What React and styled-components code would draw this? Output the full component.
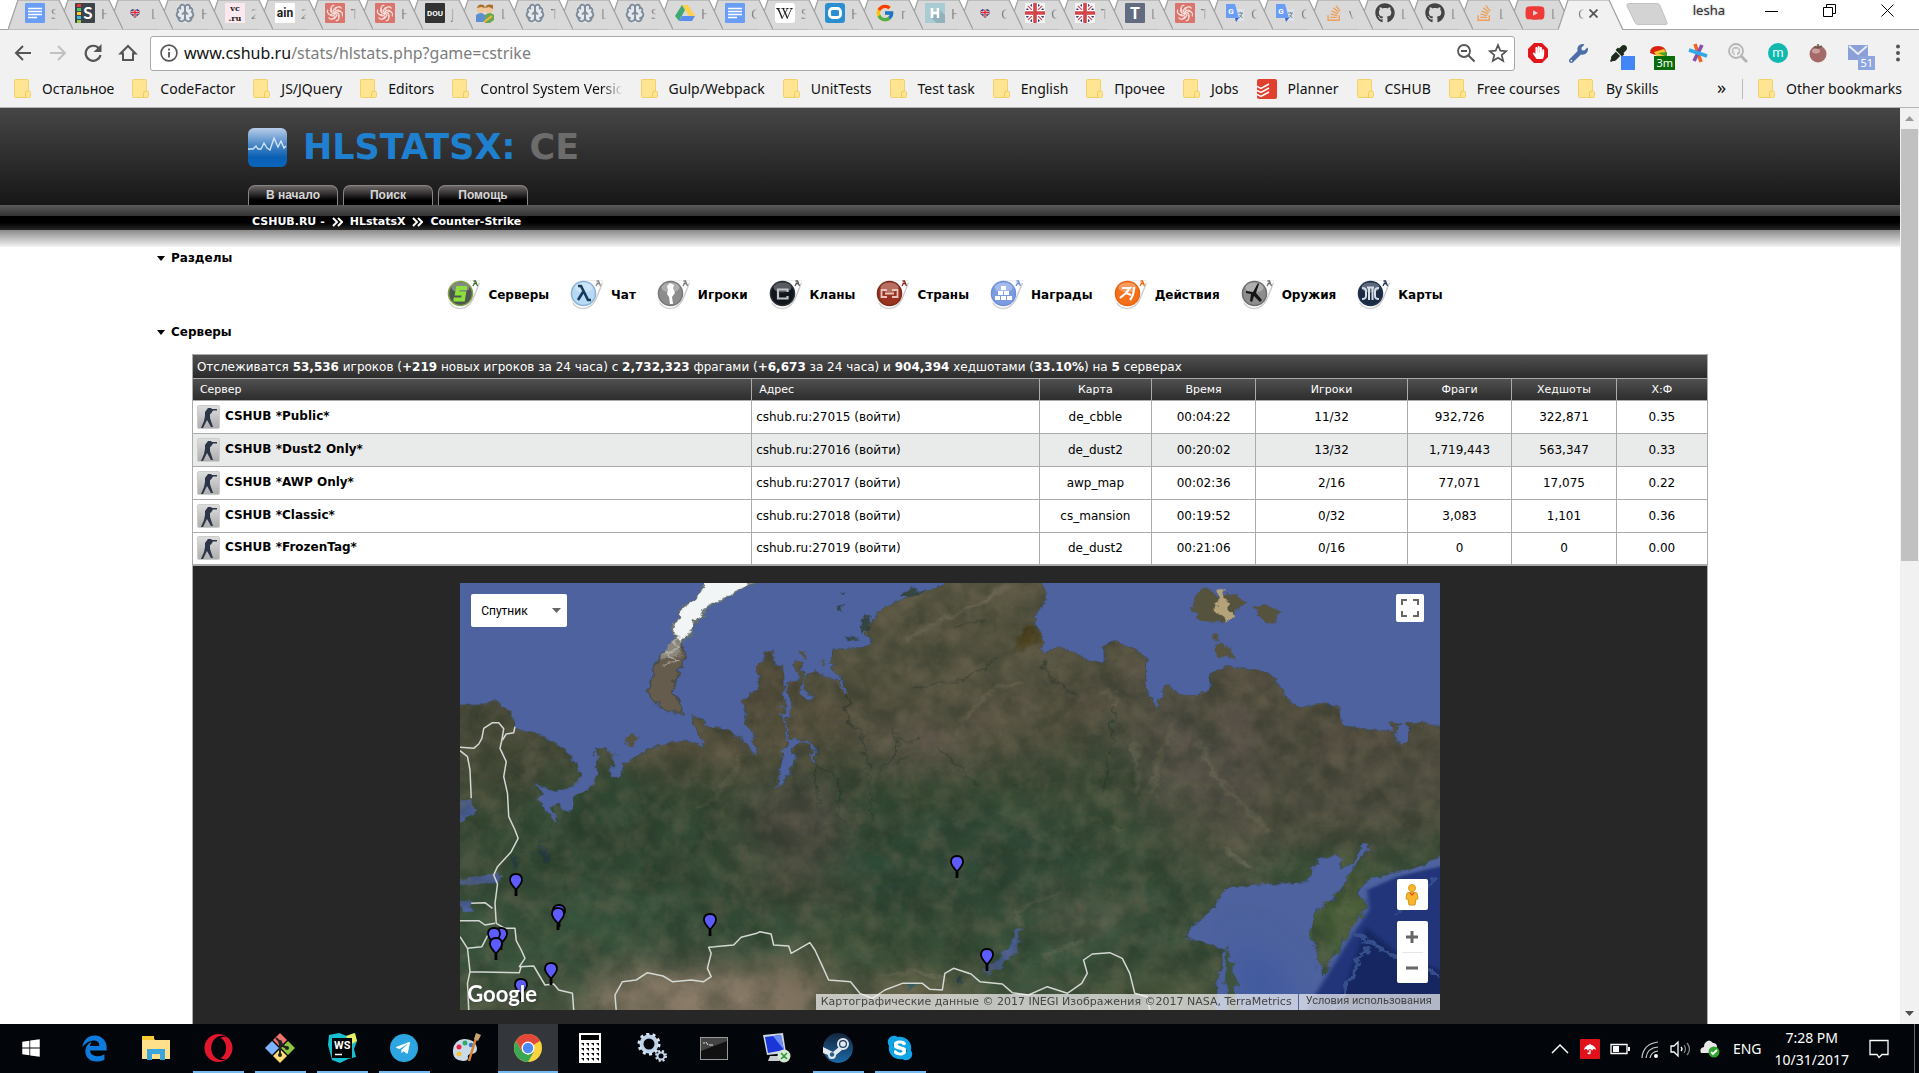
import React from "react";
import styled, { createGlobalStyle } from "styled-components";
import {
  FaGithub, FaStackOverflow, FaYoutube, FaWindows, FaEdgeLegacy, FaOpera,
  FaTelegramPlane, FaSkype, FaWrench, FaEyeDropper, FaHandPaper,
  FaWikipediaW, FaUmbrella,
} from "react-icons/fa";
import { FcGoogle } from "react-icons/fc";
import { Brain } from "lucide-react";

const UI = '"Noto Sans", "Open Sans", sans-serif';
const PAGE = '"DejaVu Sans", Verdana, sans-serif';

const Global = createGlobalStyle`
  *, *::before, *::after { box-sizing: border-box; }
  html, body { margin: 0; height: 100%; }
  body { background: #fff; overflow: hidden; }
  button, input, select { font: inherit; color: inherit; margin: 0; padding: 0; border: 0; background: none; border-radius: 0; }
  a { color: inherit; text-decoration: none; }
  svg { display: block; flex: none; }
  h1, h2, p, ul { margin: 0; padding: 0; font: inherit; list-style: none; }
`;

const Desktop = styled.div`
  height: 100vh;
  display: flex;
  flex-direction: column;
  font-family: ${UI};
`;

/* ---------- tab strip ---------- */
const TabStrip = styled.header`
  display: flex;
  height: 30px;
  padding-left: 8px;
  background: #fff;
  border-bottom: 1px solid #a5a5a5;
`;
const Tab = styled.button`
  position: relative;
  z-index: ${(p) => p.$z};
  flex: none;
  display: flex;
  align-items: center;
  gap: ${(p) => (p.$active ? 2 : 6)}px;
  width: 65px;
  height: 30px;
  margin-right: -15px;
  padding: 0 0 4px ${(p) => (p.$active ? 20 : 17)}px;
  font-size: 14px;
  color: #666;
`;
const TabShape = styled.svg`
  position: absolute;
  inset: 0;
  z-index: -1;
`;
const TabTitle = styled.span`
  mask-image: linear-gradient(90deg, #000, transparent 70%);
`;
const NewTab = styled.button`
  flex: none;
  margin: 3px 0 0 18px;
  width: 43px;
  height: 22px;
`;
const WindowTools = styled.div`
  flex: 1;
  display: flex;
  justify-content: flex-end;
  align-items: center;
  gap: 45px;
  padding: 0 25px 9px 0;
  font-size: 13px;
  color: #333;
`;
const UserName = styled.button`
  margin-right: -5px;
  text-shadow: 0 0 2px #999;
`;
const WinButton = styled.button`
  width: 13px;
  height: 13px;
`;

/* ---------- toolbar ---------- */
const Toolbar = styled.div`
  display: flex;
  align-items: center;
  gap: 16px;
  height: 46px;
  padding: 0 11px 0 13px;
  background: #f1f1f1;
`;
const IconButton = styled.button`
  flex: none;
  display: grid;
  place-items: center;
  position: relative;
  width: 20px;
  height: 24px;
  color: ${(p) => p.$color || "#555"};
  opacity: ${(p) => (p.$off ? 0.3 : 1)};
`;
const NavGroup = styled.div`
  display: flex;
  gap: 15px;
`;
const Omnibox = styled.form`
  flex: 1;
  display: flex;
  align-items: center;
  gap: 12px;
  height: 35px;
  margin-left: -4px;
  padding: 0 6px 0 9px;
  background: #fff;
  border: 1px solid #a9a9a9;
  border-radius: 3px;
`;
const UrlBox = styled.div`
  position: relative;
  flex: 1;
  display: flex;
  align-items: center;
  margin-left: -6px;
  font-size: 16px;
  line-height: 24px;
  color: #7d7d7d;
`;
const UrlInput = styled.input`
  width: 100%;
  outline: 0;
  color: transparent;
  caret-color: #000;
`;
const UrlPaint = styled.span`
  position: absolute;
  left: 0;
  pointer-events: none;
  b { font-weight: 400; color: #111; }
`;
const Extensions = styled.div`
  display: flex;
  gap: 20px;
  margin-left: -3px;
`;
const ExtBadge = styled.span`
  position: absolute;
  right: -7px;
  bottom: -5px;
  min-width: 14px;
  height: 14px;
  padding: 0 2px;
  background: ${(p) => p.$bg};
  color: #fff;
  font-size: 11px;
  line-height: 14px;
`;

/* ---------- bookmarks ---------- */
const Bookmarks = styled.nav`
  display: flex;
  align-items: center;
  gap: 18px;
  height: 32px;
  padding: 0 17px 6px 14px;
  background: #f1f1f1;
  border-bottom: 1px solid #b5b5b5;
  font-size: 14px;
  line-height: 20px;
  color: #111;
`;
const Bookmark = styled.a`
  display: flex;
  align-items: center;
  gap: 11px;
  white-space: nowrap;
`;
const Faded = styled.span`
  mask-image: linear-gradient(90deg, #000 85%, transparent);
`;
const Overflow = styled.button`
  margin-left: auto;
  padding: 0 0 3px;
  font-size: 18px;
`;
const Divider = styled.span`
  width: 1px;
  height: 20px;
  margin: 0 -3px 0 -2px;
  background: #bbb;
`;

/* ---------- page ---------- */
const Viewport = styled.div`
  flex: 1;
  min-height: 0;
  display: flex;
  background: #fff;
`;
const Page = styled.main`
  flex: 1;
  min-width: 0;
  overflow: hidden;
  font-family: ${PAGE};
  font-size: 12px;
  color: #000;
`;
const Banner = styled.div`
  display: flex;
  flex-direction: column;
  justify-content: space-between;
  height: 97px;
  padding: 19px 0 0 248px;
  background: linear-gradient(#464646, #161616);
`;
const Logo = styled.a`
  display: flex;
  align-items: center;
  gap: 16px;
  font-weight: 700;
  font-size: 35px;
  line-height: 40px;
  color: #2080d0;
  span { color: #6c6c6c; margin-left: 2px; }
`;
const MenuTabs = styled.nav`
  display: flex;
  gap: 5px;
`;
const MenuTab = styled.a`
  width: 90px;
  height: 20px;
  border: 1px solid #8a8585;
  border-bottom: 0;
  border-radius: 7px 7px 0 0;
  background: linear-gradient(#6d6767, #000 75%);
  font: 700 12px/19px "Liberation Sans", Arial, sans-serif;
  text-align: center;
  color: #d6d6d6;
`;
const Crumbs = styled.nav`
  display: flex;
  align-items: center;
  gap: 7px;
  height: 25px;
  padding: 9px 0 0 252px;
  background: linear-gradient(#5a5a5a, #333 44%, #000 45%, #000 70%, #262626);
  font-weight: 700;
  font-size: 11px;
  line-height: 14px;
  color: #fff;
`;
const Fade = styled.div`
  height: 17px;
  background: linear-gradient(#8a8a8a, #f4f4f4);
`;
const SectionTitle = styled.h2`
  display: flex;
  align-items: center;
  gap: 6px;
  padding-left: 157px;
  font-weight: 700;
  font-size: 12px;
  line-height: 22px;
`;
const Sections = styled.ul`
  display: flex;
  justify-content: center;
  gap: 21px;
  padding: 10px 10px 11px 0;
`;
const SectionLink = styled.a`
  display: flex;
  align-items: center;
  gap: 8px;
  font-weight: 700;
  font-size: 12px;
  line-height: 30px;
`;
const Board = styled.section`
  width: 79.8%;
  margin: 11px auto 0;
  border: 1px solid #ababab;
  background: #272727;
`;
const Summary = styled.p`
  padding: 1px 4px 0;
  border-bottom: 1px solid #ababab;
  background: linear-gradient(#505050, #2b2b2b);
  color: #fff;
  font-size: 12px;
  line-height: 22px;
`;
const Table = styled.table`
  width: 100%;
  table-layout: fixed;
  border-collapse: collapse;
  border-bottom: 2px solid #ababab;
  background: #fff;
`;
const Th = styled.th`
  height: 21px;
  padding: 2px 7px 0;
  border-right: 1px solid #ababab;
  border-bottom: 1px solid #ababab;
  background: linear-gradient(#505050, #2d2d2d);
  color: #fff;
  font-weight: 400;
  font-size: 11px;
  line-height: 14px;
  text-align: ${(p) => (p.$left ? "left" : "center")};
  &:last-child { border-right: 0; }
`;
const Tr = styled.tr`
  background: ${(p) => (p.$alt ? "#e9ebea" : "#fff")};
`;
const Td = styled.td`
  height: 33px;
  padding: 0 4px;
  border-right: 1px solid #ababab;
  border-bottom: 1px solid #ababab;
  line-height: 16px;
  text-align: ${(p) => (p.$left ? "left" : "center")};
  &:last-child { border-right: 0; }
`;
const ServerName = styled.a`
  display: flex;
  gap: 5px;
  font-weight: 700;
  line-height: 22px;
`;

/* ---------- map ---------- */
const MapBox = styled.div`
  position: relative;
  width: 64.7%;
  margin: 17px auto 16px;
  height: 427px;
  overflow: hidden;
  background: #4d639e;
`;
const MapArt = styled.svg`
  width: 100%;
  height: 100%;
`;
const Pin = styled.button`
  position: absolute;
  left: ${(p) => p.$x}%;
  top: ${(p) => p.$y}%;
  width: 14px;
  height: 23px;
  transform: translate(-50%, 0);
`;
const MapType = styled.label`
  position: absolute;
  left: 11px;
  top: 11px;
  display: flex;
  align-items: center;
  width: 96px;
  height: 33px;
  padding: 0 6px 0 10px;
  border-radius: 2px;
  background: #fff;
  font: 12px/16px Roboto, sans-serif;
  select { appearance: none; flex: 1; outline: 0; }
`;
const MapControl = styled.div`
  position: absolute;
  right: ${(p) => p.$right}px;
  top: ${(p) => p.$top}px;
  display: flex;
  flex-direction: column;
  background: #fff;
  border-radius: 2px;
`;
const MapButton = styled.button`
  display: grid;
  place-items: center;
  width: ${(p) => p.$size}px;
  height: ${(p) => p.$size}px;
  & + &::before {
    content: "";
    position: absolute;
    top: 31px;
    left: 5px;
    right: 5px;
    border-top: 1px solid #e6e6e6;
  }
`;
const GoogleMark = styled.a`
  position: absolute;
  left: 7px;
  bottom: 2px;
  font: 700 22px/28px Lato, sans-serif;
  color: #fff;
  text-shadow: 0 0 2px #444;
`;
const Attribution = styled.div`
  position: absolute;
  right: 0;
  bottom: 0;
  display: flex;
  background: rgba(245, 245, 245, 0.7);
  color: #444;
  font-size: 11px;
  line-height: 16px;
  span { padding: 0 6px 0 5px; border-right: 1px solid #4d639e; }
  a { padding: 0 8px 0 7px; font: 11px/14px Roboto, sans-serif; }
`;

const ScrollBar = styled.div`
  flex: none;
  display: flex;
  flex-direction: column;
  align-items: center;
  width: 19px;
  padding: 8px 0;
  background: #f1f1f1;
`;
const Thumb = styled.div`
  width: 17px;
  height: 48%;
  margin: 8px 0 auto;
  background: #c1c1c1;
`;

/* ---------- taskbar ---------- */
const TaskBar = styled.footer`
  flex: none;
  display: flex;
  justify-content: space-between;
  height: 49px;
  background: #020509;
  color: #fff;
`;
const Apps = styled.div`
  display: flex;
  gap: 2px;
`;
const AppButton = styled.button`
  position: relative;
  display: grid;
  place-items: center;
  width: ${(p) => (p.$wide ? 62 : 60)}px;
  padding-bottom: 1px;
  color: ${(p) => p.$color || "#fff"};
  background: ${(p) => (p.$active ? "#33373b" : "none")};
  &::after {
    content: "";
    position: absolute;
    bottom: 0;
    left: ${(p) => (p.$active ? 0 : 5)}px;
    right: ${(p) => (p.$active ? 0 : 4)}px;
    height: ${(p) => (p.$open || p.$active ? 2 : 0)}px;
    background: #76b9ed;
  }
`;
const Tray = styled.div`
  display: flex;
  align-items: center;
  gap: 10px;
  margin-right: 4px;
  padding-right: 25px;
  border-right: 1px solid #667;
  font-size: 14px;
`;
const Language = styled.span`
  margin-left: 3px;
`;
const Clock = styled.time`
  margin: 0 10px 0 3px;
  text-align: center;
  line-height: 22px;
`;

/* ---------- small drawings ---------- */
const Svg = ({ s = 20, w = s, h = s, vb = "0 0 20 20", ...rest }) => (
  <svg width={w} height={h} viewBox={vb} fill="none" aria-hidden="true" {...rest} />
);

const Folder = () => (
  <Svg w={17} h={19} vb="0 0 17 19">
    <path d="M1.500 .5h12q1 0 1 1V12h.5q1.500 0 1.500 2v3q0 1.500-1.500 1.500H1.500q-1 0-1-1V1.500q0-1 1-1z" fill="#ffe592" stroke="#f2d16b" />
    <path d="M11.500 18.500v-4q0-2.500 3-2.500" stroke="#eec95b" />
  </Svg>
);
const Tile = ({ bg, fg = "#fff", t, size = 11, font = "Roboto", r = 1 }) => (
  <Svg>
    <rect width="20" height="20" rx={r} fill={bg} />
    <text x="10" y={10 + size * 0.36} fontSize={size} fontWeight="700" fontFamily={font} fill={fg} textAnchor="middle">{t}</text>
  </Svg>
);
const VcRu = () => (
  <Svg>
    <rect width="20" height="20" fill="#fbe9ef" />
    <g fontSize="8" fontWeight="700" fontFamily="DejaVu Serif" fill="#222" textAnchor="middle"><text x="10" y="8">vc</text><text x="10" y="18">.ru</text></g>
  </Svg>
);
const Docs = () => (
  <Svg>
    <rect width="20" height="20" rx="1" fill="#6a9df8" />
    <path d="M3 5.500h14M3 8.500h14M3 11.500h14M3 14.500h9" stroke="#fff" strokeWidth="1.500" />
  </Svg>
);
const SSlides = () => (
  <Svg>
    <rect width="20" height="20" rx="1" fill="#3c434b" />
    <path d="M4 1v3" stroke="#e33" strokeWidth="4" /><path d="M4 5v3" stroke="#4c6" strokeWidth="4" />
    <path d="M4 9v3" stroke="#fc3" strokeWidth="4" /><path d="M4 13v3" stroke="#3bd" strokeWidth="4" /><path d="M4 17v3" stroke="#9c4" strokeWidth="4" />
    <text x="13" y="16" fontSize="17" fontWeight="700" fontFamily="Lato" fill="#fff" textAnchor="middle">S</text>
  </Svg>
);
const Heart = () => (
  <Svg>
    <path d="M10 15 5.500 11V7.500L7.500 6 10 7 12.500 6l2 1.500V11z" fill="#4a4a7a" />
    <path d="M10 7v7M6 9.500h8" stroke="#fff" strokeWidth="2.600" /><path d="M10 7v7M6 9.500h8" stroke="#d23" strokeWidth="1.400" />
  </Svg>
);
const Flag = () => (
  <Svg>
    <rect width="20" height="20" fill="#f4f4f4" /><circle cx="10" cy="10" r="9.500" fill="#33407e" />
    <path d="M3 3l14 14M17 3L3 17" stroke="#fff" strokeWidth="4" /><path d="M3 3l14 14M17 3L3 17" stroke="#d2555a" strokeWidth="1.200" />
    <path d="M10 0v20M0 10h20" stroke="#fff" strokeWidth="6" /><path d="M10 0v20M0 10h20" stroke="#d2454a" strokeWidth="3.600" />
  </Svg>
);
const Swirl = () => (
  <Svg>
    <rect width="20" height="20" rx="1" fill="#d9756c" />
    <g stroke="#f7dcd8" strokeWidth="1.300">
      {[0, 60, 120, 180, 240, 300].map((a) => <path key={a} transform={`rotate(${a} 10 10)`} d="M10 10c0-3 4-4 6-1M10 7c1-4 5-4 6.500-1.500" />)}
    </g>
  </Svg>
);
const Drive = () => (
  <Svg>
    <path d="M7 2h6l7 11h-6z" fill="#ffd04b" /><path d="M7 2l3 5L4 18l-4-5z" fill="#3fa972" /><path d="M7 13h13l-3 5H4z" fill="#5b8df0" />
  </Svg>
);
const Ring = () => (
  <Svg>
    <rect width="20" height="20" rx="3" fill="#2a8fd0" /><rect x="4.500" y="5.500" width="11" height="9" rx="3" stroke="#fff" strokeWidth="2.800" />
  </Svg>
);
const Translate = () => (
  <Svg>
    <path d="M9 6h10v12h-7z" fill="#dde3ea" /><path d="M1 1h9l4 14H1z" fill="#6a9df8" /><path d="M10 15h4l-3 4z" fill="#3a62c8" />
    <text x="6" y="11" fontSize="8" fontWeight="700" fontFamily="Roboto" fill="#fff" textAnchor="middle">G</text>
    <path d="M13 10h5M15.500 9v1M17 10c-1 3-2 4-3 5M14.500 12l3 3" stroke="#7a8590" />
  </Svg>
);
const HShadow = () => (
  <Svg>
    <rect width="20" height="20" fill="#a9cbd3" /><path d="M14 6l6 6v8h-8l-6-5z" fill="#8fb2bd" />
    <path d="M7 5v10M13 5v10M7 10h6" stroke="#fff" strokeWidth="2.500" />
  </Svg>
);
const People = () => (
  <Svg>
    <path d="M1 12q5-4 9 0v7H1z" fill="#5b8fd0" /><path d="M10 12q5-4 9 0v5l-4 3h-5z" fill="#6aa84f" />
    <circle cx="6" cy="6" r="4" fill="#f2c79a" /><circle cx="14" cy="6" r="4" fill="#f2c79a" />
    <path d="M2 5q1-5 7-3l1 3-4-1zM10 5q1-5 8-3v4l-4-2z" fill="#a8712d" /><path d="M9 19l8-6" stroke="#f3b53b" strokeWidth="2" />
  </Svg>
);
const brain = <Svg><circle cx="10" cy="10" r="9.500" fill="#e6e9ec" /><Brain x="0" y="0" size={20} color="#7d8a9a" strokeWidth={2.200} /></Svg>;
const so = <FaStackOverflow size={18} color="#f0a05a" />;
const gh = <FaGithub size={20} color="#444" />;

const tabs = [
  [<Docs />, "S"], [<SSlides />, "H"], [<Heart />, "L"], [brain, "H"],
  [<VcRu />, "2"],
  [<Tile bg="#fff" fg="#222" t="ain" size={12} />, "2"], [<Swirl />, "T"], [<Swirl />, "H"],
  [<Tile bg="#333" t="DOU" size={8} />, "J"], [<People />, "L"], [brain, "T"], [brain, "L"], [brain, "S"],
  [<Drive />, "H"], [<Docs />, "C"],
  [<Svg><rect width="20" height="20" rx="3" fill="#fff" /><FaWikipediaW x="1" y="2" size={17} color="#222" /></Svg>, "S"],
  [<Ring />, "H"], [<FcGoogle size={20} />, "п"], [<HShadow />, "H"], [<Heart />, "C"], [<Flag />, "C"], [<Flag />, "T"],
  [<Tile bg="#626b80" t="T" size={16} />, "L"], [<Swirl />, "T"], [<Translate />, "C"], [<Translate />, "C"],
  [so, "v"], [gh, "L"], [gh, "L"], [so, "L"], [<FaYoutube size={20} color="#f03a38" />, "L"],
];

const bookmarks = ["Остальное", "CodeFactor", "JS/JQuery", "Editors", "Control System Versic", "Gulp/Webpack", "UnitTests",
  "Test task", "English", "Прочее", "Jobs", "Planner", "CSHUB", "Free courses", "By Skills"];

const Todoist = () => (
  <Svg>
    <rect width="20" height="20" rx="2" fill="#e2402f" />
    <path d="M0 7.500l4 2 8-4.500M0 11.500l4 2 8-4.500M0 15.500l4 2 8-4.500" stroke="#fff" strokeWidth="1.500" />
  </Svg>
);

/* Round badge with the small figure at its upper right */
const Badge = ({ fill, edge, mark, children }) => (
  <Svg w={33} h={31} vb="0 0 33 31">
    <path d="M13 1.500H33L25 22Q21 30 13 30 1 29 1 16 1 2 13 1.500z" fill="#fff" stroke="#efefef" />
    <path d="M32.500 4L26 20Q22 29 13 29.500 6 29 3 24" stroke="#c9c9c9" strokeWidth="1.200" />
    <circle cx="13.500" cy="14.500" r="12" fill={fill} stroke={edge} strokeWidth="1.500" />
    <ellipse cx="13.500" cy="8.500" rx="9" ry="5" fill="#fff" opacity=".3" />
    <path d="M26.500 2h2l2 5M28 3.500L26 7M26.500 4.500h3" stroke={mark || edge} strokeWidth="1.300" />
    {children}
  </Svg>
);
const sections = [
  ["Серверы", <Badge fill="#4f5550" edge="#7fa344" mark="#3c6a2a"><path d="M20 9h-9l-1 5.500h7l-1 6H6.500" stroke="#8be03a" strokeWidth="4" /></Badge>],
  ["Чат", <Badge fill="#b8d9f3" edge="#8ab2d6" mark="#888"><path d="M8 7h3l7 14h3M13 13l-5 8" stroke="#123a5e" strokeWidth="2.600" /></Badge>],
  ["Игроки", <Badge fill="#8c8c8c" edge="#777"><path d="M13 4l4 2-1 3 2 5-3 4 1 7h-3l-1-7-2-3 1-4-1-4z" fill="#fff" /></Badge>],
  ["Кланы", <Badge fill="#10161c" edge="#2a3036" mark="#555"><path d="M18.500 13v-2.500H9v9h9.500V17" stroke="#bfc3c6" strokeWidth="2.200" /></Badge>],
  ["Страны", <Badge fill="#99321f" edge="#7f2a1c"><path d="M11 11H5.500v7H11M16 11h5.500v7H16M9 14.500h9" stroke="#e6c4bb" strokeWidth="1.800" /></Badge>],
  ["Награды", <Badge fill="#7c9ce2" edge="#6f8fd8"><path d="M11 7h5v4h-5zM8 12h5v4H8zM14 12h5v4h-5zM5 17h5v4H5zM11 17h5v4h-5zM17 17h5v4h-5z" fill="#fff" /></Badge>],
  ["Действия", <Badge fill="#f4701a" edge="#e8640f"><path d="M8 9h8l-4 5-6 5M12 14l5 2M20 8q0 8-4 13" stroke="#fff" strokeWidth="2.200" /></Badge>],
  ["Оружия", <Badge fill="#8d8d8d" edge="#6d6d6d"><path d="M5 12l7 1 5-9 1 1-3 9 6 7-2 2-6-6-2 6-2-1 1-7-5-1z" fill="#151515" /></Badge>],
  ["Карты", <Badge fill="#1b2b44" edge="#22344f"><path d="M5 9q4 0 4 3v5q0 3-4 3M22 9q-4 0-4 3v5q0 3 4 3M12 9v12M15.500 9v12M10 8.500h7" stroke="#d4dde8" strokeWidth="2" /></Badge>],
];

const servers = [
  ["*Public*", 27015, "de_cbble", "00:04:22", "11/32", "932,726", "322,871", "0.35"],
  ["*Dust2 Only*", 27016, "de_dust2", "00:20:02", "13/32", "1,719,443", "563,347", "0.33"],
  ["*AWP Only*", 27017, "awp_map", "00:02:36", "2/16", "77,071", "17,075", "0.22"],
  ["*Classic*", 27018, "cs_mansion", "00:19:52", "0/32", "3,083", "1,101", "0.36"],
  ["*FrozenTag*", 27019, "de_dust2", "00:21:06", "0/16", "0", "0", "0.00"],
];
const columns = [["Сервер", 36.9], ["Адрес", 19], ["Карта", 7.4], ["Время", 6.9], ["Игроки", 10], ["Фраги", 6.9], ["Хедшоты", 6.9], ["Х:Ф", 6]];

const Soldier = () => (
  <Svg w={23} h={24} vb="0 0 23 24">
    <defs><linearGradient id="plate" x2="0" y2="1"><stop stopColor="#dedede" /><stop offset="1" stopColor="#adadad" /></linearGradient></defs>
    <rect x=".5" y=".5" width="22" height="23" rx="1.500" fill="url(#plate)" stroke="#ccc" />
    <path d="M11 3h3l1 1h5v1.500h-4l-2 3-1 .5v4l3 9h-2l-4-7-2 4-2 4H4l3-7 1-5 0-4z" fill="#2c3448" />
  </Svg>
);
const Chevrons = () => <Svg w={11} h={10} vb="0 0 11 10"><path d="M1 1l4 4-4 4M6 1l4 4-4 4" stroke="#fff" strokeWidth="2" /></Svg>;
const Caret = () => <Svg w={8} h={5} vb="0 0 8 5"><path d="M0 0h8L4 5z" fill="#000" /></Svg>;

/* ---------- satellite map ---------- */
const LAND = "M-20 382L12 372 28 376 55 365 66 382 80 395 88 420 84 440 112 460 138 476 160 500 180 535 193 580 190 608 170 625 150 632 118 610 128 640 130 688 146 702 154 735 158 725 148 682 156 672 166 692 180 698 182 650 200 635 212 610 222 580 220 540 216 503 236 506 248 526 244 560 236 548 240 592 256 592 262 552 300 512 330 490 360 484 392 502 384 470 376 440 368 405 382 410 390 440 430 450 456 485 475 530 474 490 464 450 455 430 455 360 476 328 478 260 488 222 496 212 504 250 518 262 518 320 516 400 524 480 512 560 503 622 512 622 534 560 536 495 545 486 560 494 566 555 572 548 566 490 550 478 530 474 524 430 530 370 524 320 540 300 544 280 534 242 548 245 550 300 540 340 556 360 570 352 550 330 556 282 570 275 600 300 614 345 622 340 606 290 598 280 596 212 640 202 658 196 650 150 668 100 696 70 720 50 760 30 790 -10 932 -10 938 60 918 110 930 170 933 218 955 202 980 210 1000 240 1030 248 1030 200 1042 182 1080 210 1097 240 1097 330 1115 388 1130 316 1150 340 1180 350 1200 332 1200 280 1230 260 1290 275 1308 310 1322 348 1340 384 1390 370 1408 390 1410 432 1440 446 1494 455 1490 430 1504 432 1495 470 1512 498 1522 465 1516 428 1540 430 1590 438V805L1530 865 1490 875 1452 900 1438 940 1452 975 1435 1030 1400 1120 1385 1188 1374 1150 1363 1060 1368 1000 1400 950 1428 880 1455 790 1444 790 1430 850 1412 862 1405 820 1372 836 1355 900 1330 912 1290 912 1230 920 1200 990 1158 1072 1190 1085 1222 1110 1214 1180 1208 1310 H-20z";
const LandPatches = [
  [760, 150, 320, 190, "#5a5443", 0.9], [1400, 560, 300, 240, "#544f42", 0.8], [1180, 330, 220, 100, "#5a5344", 0.8],
  [740, 480, 110, 90, "#655a50", 0.65], [550, 720, 100, 110, "#4e4942", 0.8], [590, 900, 150, 70, "#504a3c", 0.6],
  [420, 480, 170, 90, "#54513d", 0.9], [880, 400, 90, 100, "#60584a", 0.6], [900, 700, 300, 120, "#374e36", 0.7],
  [220, 780, 140, 230, "#314b36", 0.8], [800, 860, 220, 140, "#304b38", 0.9], [1120, 480, 50, 260, "#5b554d", 0.6],
  [1220, 760, 80, 160, "#635a4a", 0.55], [1230, 560, 80, 180, "#54524b", 0.5], [400, 1260, 200, 110, "#8f7d6b", 0.95],
  [540, 1200, 70, 90, "#7a6c57", 0.6], [720, 1250, 90, 60, "#7a6a50", 0.75], [1150, 1230, 130, 80, "#4a543c", 0.7],
  [1000, 1010, 90, 70, "#59604e", 0.6], [60, 520, 110, 130, "#444b39", 0.8], [1420, 1000, 60, 140, "#4f663c", 0.9],
  [490, 340, 70, 170, "#57503e", 0.9], [580, 400, 60, 120, "#57533f", 0.8], [700, 1080, 160, 60, "#3f5239", 0.7], [200, 1060, 220, 110, "#3a5740", 0.7],
  [1000, 600, 130, 80, "#414f3a", 0.6], [1250, 1050, 120, 60, "#44543b", 0.6],
];
const Borders = [
  "M0 502L22 505 30 492 35 475 38 445 52 428 62 428 70 446 67 480 64 505 74 545 70 590 76 640 78 710 88 750 93 775 82 815 60 860 54 885 60 912 56 970 58 1030 72 1045 88 1045 90 1082 98 1110 104 1135 95 1160 118 1158 136 1215 150 1212 158 1230 180 1240 182 1290",
  "M88 440L86 458 74 462 68 480", "M0 512L12 530 16 570 18 655",
  "M0 1022L30 1022 40 1035 56 1030M18 970L40 968 52 985M0 1070L12 1105 35 1100 46 1060M12 1105L16 1175 95 1178 98 1158M16 1175L12 1210 14 1290",
  "M250 1290L248 1245 260 1205 282 1200 300 1178 325 1188 340 1205 370 1200 390 1205 402 1190 396 1165 402 1120 398 1102 438 1095 450 1072 475 1060 480 1055 498 1062 502 1095 526 1098 530 1120 560 1088 568 1110 578 1150 590 1200 625 1205 640 1240 660 1255 680 1230 708 1210 740 1210 752 1228 772 1230 776 1180 790 1165 818 1182 832 1205 868 1212 884 1238 910 1245 940 1220 972 1240 995 1210 1004 1180 998 1140 1012 1122 1040 1118 1060 1135 1072 1180 1080 1240 1100 1250 1104 1290",
];
const Rivers = [
  "M858 235L830 275 800 300 760 312 720 325", "M568 558L600 580 608 650 604 700 614 730", "M568 500L570 600 574 690",
  "M618 340L622 430 645 460 652 560 664 760", "M140 770L128 800 138 850", "M84 820L94 860",
  "M690 440L700 490 690 540 670 580", "M700 470L720 490 740 470", "M934 240L940 290 990 350", "M1050 380L1040 520 1030 640",
  "M790 140L810 130 840 120", "M910 760L920 790", "M718 530L690 560", "M760 500L800 560 830 620",
];
const DarkBands = [["M380 700L374 860 362 1000 355 1180", 16], ["M660 540L670 700 690 800", 12], ["M1045 400L1035 560", 12], ["M690 960L760 1100", 16]];
const Ridges = [
  ["M870 20L830 75 760 130 712 180", 7], ["M905 312L860 320 830 370 800 430 802 480", 6], ["M448 520L440 580 410 650 380 690", 4],
  ["M1140 430L1115 560 1108 640", 4], ["M1180 480L1210 590 1250 670 1300 760", 5], ["M1220 800L1260 860", 8], ["M1080 480L1085 640", 5],
  ["M1012 710L1025 730M1040 740L1060 750", 4], ["M1020 340L1045 330 1050 380", 5], ["M900 1040L890 1000 920 960 960 940", 4], ["M680 1190L730 1170 780 1200", 6],
  ["M930 1130L1000 1080", 5], ["M1425 900L1410 1000", 4],
];

function SatelliteMap() {
  return (
    <MapArt viewBox="0 9 1568 1281" preserveAspectRatio="none" role="img" aria-label="Карта игроков">
      <defs>
        <clipPath id="land"><path d={LAND} /></clipPath>
        <filter id="soft" x="-50%" y="-50%" width="200%" height="200%"><feGaussianBlur stdDeviation="30 44" /></filter>
        <filter id="soften" x="-20%" y="-20%" width="140%" height="140%"><feGaussianBlur stdDeviation="3" /></filter>
        <filter id="rugged" filterUnits="userSpaceOnUse" x="-30" y="-30" width="1640" height="1360">
          <feTurbulence type="fractalNoise" baseFrequency="0.06 0.04" numOctaves="4" seed="3" result="n" />
          <feDisplacementMap in="SourceGraphic" in2="n" scale="22" xChannelSelector="R" yChannelSelector="G" />
        </filter>
        <filter id="dark" x="0" y="0" width="100%" height="100%" colorInterpolationFilters="sRGB">
          <feTurbulence type="fractalNoise" baseFrequency="0.018 0.011" numOctaves="7" seed="8" />
          <feColorMatrix values="0 0 0 0 0.12  0 0 0 0 0.17  0 0 0 0 0.12  1.6 1.6 0 0 -1.2" />
        </filter>
        <filter id="light" x="0" y="0" width="100%" height="100%" colorInterpolationFilters="sRGB">
          <feTurbulence type="fractalNoise" baseFrequency="0.03 0.016" numOctaves="7" seed="21" />
          <feColorMatrix values="0 0 0 0 0.5  0 0 0 0 0.46  0 0 0 0 0.37  0 1.800 1.400 0 -1.3" />
        </filter>
        <linearGradient id="green" x2="0" y2="1">
          <stop stopColor="#5a5442" /><stop offset=".33" stopColor="#504f3d" /><stop offset=".52" stopColor="#3b4d37" />
          <stop offset=".85" stopColor="#37523c" /><stop offset="1" stopColor="#4a5842" />
        </linearGradient>
      </defs>
      <rect y="9" width="1568" height="1281" fill="#4d629e" />
      <path d="M1590 850L1500 890 1452 930 1455 990 1430 1060 1400 1150 1370 1240 1350 1310H1590z" fill="#20357a" filter="url(#soften)" />
      <path d="M1450 1040L1500 1120 1590 1185V1310H1400z" fill="#172860" filter="url(#soften)" />
      <path d="M1430 1060L1500 1130 1568 1185M1400 1290L1450 1100M1560 900L1500 1000" stroke="#35508c" strokeWidth="7" fill="none" filter="url(#rugged)" />
      <path d="M1245 1060L1250 1290H1330L1320 1180z" fill="#4059a0" filter="url(#soft)" />
      <g filter="url(#rugged)">
        <path d={LAND} fill="url(#green)" stroke="#3b4a4a" strokeWidth="2" />
        <g clipPath="url(#land)">
          <g filter="url(#soft)">
            {LandPatches.map(([x, y, rx, ry, c, o], i) => <ellipse key={i} cx={x} cy={y} rx={rx} ry={ry} fill={c} opacity={o} />)}
          </g>
          <g filter="url(#soft)" stroke="#28412f" fill="none" opacity=".5">{DarkBands.map(([d, w]) => <path key={d} d={d} strokeWidth={w * 3} />)}</g>
          <g filter="url(#soften)" stroke="#8f8672" fill="none" opacity=".55">
            {Ridges.map(([d, w]) => <path key={d} d={d} strokeWidth={w} />)}
          </g>
          <path d="M860 235L890 210 900 150 920 130 925 190 900 205z" fill="#4c411f" filter="url(#soften)" />
          <g stroke="#28382f" strokeWidth="2.500" fill="none" opacity=".75">{Rivers.map((d) => <path key={d} d={d} />)}</g>
        </g>
        <g fill="#55523c">
          <path d="M345 180L362 175 358 230 345 290 342 330 356 380 358 400 335 395 315 370 302 335 308 270 325 220z" fill="#655c4e" stroke="#3d4038" strokeWidth="2" />
          <path d="M1180 40L1195 20 1212 50 1240 45 1254 70 1240 100 1218 125 1190 125 1172 90z" />
          <path d="M1270 80L1290 75 1315 100 1300 130 1275 105zM1208 190L1218 185 1240 215 1240 235 1208 230zM265 475L275 458 286 475 280 500 268 500zM1206 160L1215 160 1214 180 1206 178z" />
          <path d="M1226 1090L1236 1150 1248 1290H1228L1224 1180z" fill="#3e5240" />
          <path d="M546 215L556 215 554 232 546 232zM578 240L584 240 584 262 577 260z" />
          <path d="M605 38L618 34 616 42 606 44zM608 75L614 70 614 98 608 90zM700 45L722 25 745 35 720 52zM640 130L655 100 655 150 640 160zM615 170L640 175 625 184z" fill="#34443f" />
        </g>
        <path d="M400 0H475L435 45 400 75 385 110 370 150 362 185 344 180 342 130 360 75 385 30z" fill="#f2f5f6" stroke="#66706c" strokeWidth="4" />
        <path d="M335 185H362L350 225 322 235z" fill="#8b877c" />
        <path d="M342 160L356 170 338 190 354 205 330 220 350 240 325 255" stroke="#c4c2b8" strokeWidth="3" fill="none" />
        <path d="M1210 95L1216 30 1224 30 1228 70 1242 110 1222 125z" fill="#b3a27a" />
        <path d="M-20 905L50 882 68 884 60 905 -20 925zM-20 660L24 656 20 700 -20 762zM-20 950L16 960 20 990 8 998zM891 1045L901 1045 892 1110 864 1165 840 1186 838 1170 858 1140 880 1100z" fill="#4d629e" />
        <path d="M712 1210L730 1210 720 1232z" fill="#1e5a66" />
        <path d="M796 1185L802 1185 801 1215 797 1212zM84 835L92 830 96 875 87 868zM130 795L138 800 140 850 133 845z" fill="#263f4c" />
      </g>
      <g clipPath="url(#land)">
        <rect y="9" width="1568" height="1281" filter="url(#dark)" opacity=".35" />
        <rect y="9" width="1568" height="1281" filter="url(#light)" opacity=".3" />
      </g>
      <g stroke="#d4d8d3" strokeWidth="1.500" fill="none" strokeLinejoin="round">
        {Borders.map((d) => <path key={d} d={d} vectorEffect="non-scaling-stroke" />)}
      </g>
    </MapArt>
  );
}

const pins = [[90, 880], [158, 973], [156, 981], [400, 1000], [795, 826], [844, 1105], [65, 1041], [54, 1041], [57, 1070], [145, 1145], [98, 1193]];

/* ---------- taskbar drawings ---------- */
const Explorer = () => (
  <Svg w={28} h={25} vb="0 0 28 25"><path d="M0 1h11l2 3h15v19H0z" fill="#ffe08a" /><path d="M0 0h12v4H0z" fill="#f9c933" /><path d="M5 13h18v11h-5v-6h-8v6H5z" fill="#39a5dc" /></Svg>
);
const GitBash = () => (
  <Svg s={30} vb="0 0 30 30">
    <path d="M15 0l7 7-7 7-7-7z" fill="#f0736a" /><path d="M7 8l7 7-7 7-7-7z" fill="#80b3ff" /><path d="M23 8l7 7-7 7-7-7z" fill="#8cc63f" /><path d="M15 16l7 7-7 7-7-7z" fill="#ffdc73" />
    <path d="M11 5l8 8M15 9v14M16 12l6 3" stroke="#222" strokeWidth="2" /><circle cx="15" cy="9" r="2" fill="#222" /><circle cx="15" cy="22" r="2" fill="#222" /><circle cx="22" cy="15" r="2" fill="#222" />
  </Svg>
);
const WebStorm = () => (
  <Svg s={30} vb="0 0 30 30">
    <path d="M2 2l10-2 8 3 7-3 3 8-3 8 2 8-8 2-8 4-8-3L1 12z" fill="#17bfd0" /><path d="M19 3l9-3 2 8-7 4z" fill="#e8f062" />
    <rect x="5" y="5" width="20" height="20" fill="#000" /><text x="7" y="16" fontSize="11" fontWeight="700" fontFamily="Roboto" fill="#fff">WS</text><path d="M8 21.500h7" stroke="#fff" strokeWidth="1.500" />
  </Svg>
);
const Telegram = () => (
  <Svg s={28} vb="0 0 28 28"><circle cx="14" cy="14" r="14" fill="#2ca5e0" /><FaTelegramPlane x="5" y="6" size={16} color="#fff" /></Svg>
);
const Paint = () => (
  <Svg s={30} vb="0 0 30 30">
    <path d="M13 6q12 0 13 10 0 5-7 5-3 1-2 4 0 3-5 3Q1 27 2 17 3 7 13 6z" fill="#c9dbe8" />
    <circle cx="8" cy="14" r="2.500" fill="#e24" /><circle cx="14" cy="10" r="2.500" fill="#3a6" /><circle cx="20" cy="12" r="2.300" fill="#47c" /><circle cx="8" cy="21" r="2.500" fill="#f5c33b" />
    <path d="M25 5L18 28" stroke="#d9822b" strokeWidth="2.500" /><path d="M23 6l2-6 5 2-3 6z" fill="#c9a26c" />
  </Svg>
);
const Chrome = () => (
  <Svg s={28} vb="0 0 28 28">
    <circle cx="14" cy="14" r="14" fill="#fbd33f" /><path d="M14 14L1.900 7A14 14 0 0 1 26.100 7z" fill="#e2493b" /><path d="M14 7h12.100A14 14 0 0 0 1.900 7L8 17.500z" fill="#e2493b" />
    <path d="M1.900 7A14 14 0 0 0 14 28l6-10.500-6 3.500-6-3.500z" fill="#3aa757" /><circle cx="14" cy="14" r="6.500" fill="#fff" /><circle cx="14" cy="14" r="5.200" fill="#4a8af4" />
  </Svg>
);
const Calculator = () => (
  <Svg w={22} h={30} vb="0 0 22 30"><rect width="22" height="30" fill="#fff" /><path d="M2 2h18v5H2z" fill="#000" />
    {[10, 15, 20, 25].map((y) => [2, 7, 12, 17].map((x) => <path key={x + "-" + y} d={`M${x} ${y}h3v3z`} fill="#000" />))}</Svg>
);
const Gears = () => (
  <Svg s={30} vb="0 0 30 30">
    <circle cx="12" cy="11" r="7.500" stroke="#bcd2e8" strokeWidth="4" /><circle cx="12" cy="11" r="10" stroke="#d6e4f2" strokeWidth="3" strokeDasharray="3 3.300" />
    <circle cx="24" cy="23" r="3.500" stroke="#bcd2e8" strokeWidth="2" /><circle cx="24" cy="23" r="5" stroke="#d6e4f2" strokeWidth="2" strokeDasharray="2 2" />
  </Svg>
);
const Console = () => (
  <Svg w={28} h={23} vb="0 0 28 23"><rect x=".5" y=".5" width="27" height="22" fill="#111" stroke="#999" /><path d="M1 1h26v3L1 14z" fill="#444" /><path d="M3 6h2M6 5l2 3M9 8h4" stroke="#ddd" /></Svg>
);
const Remote = () => (
  <Svg s={30} vb="0 0 30 30"><path d="M2 2l20-2 3 20-19 2z" fill="#d0d6de" /><path d="M4 4l16-2 3 15-16 3z" fill="#1a35d8" /><path d="M12 3l8-1 3 15z" fill="#6b8df4" /><path d="M9 23h9v5H7z" fill="#c9ccd0" />
    <circle cx="23" cy="23" r="6.500" fill="#d8e8d4" /><path d="M20 20l3 3-3 3M26 20l-3 3 3 3" stroke="#2c9a3a" strokeWidth="1.500" /></Svg>
);
const Steam = () => (
  <Svg s={30} vb="0 0 30 30">
    <defs><linearGradient id="steam" x2="0" y2="1"><stop stopColor="#16243c" /><stop offset="1" stopColor="#1b6aa8" /></linearGradient></defs>
    <circle cx="15" cy="15" r="15" fill="url(#steam)" /><path d="M0 14l10 5 6-5 3 3-6 5q0 4-4 4t-4-4l-5-2z" fill="#e4e9ef" /><circle cx="9" cy="21.500" r="2.200" fill="#2a5c8c" />
    <circle cx="20" cy="11" r="5" stroke="#e4e9ef" strokeWidth="2" /><circle cx="20" cy="11" r="2.800" fill="#e4e9ef" />
  </Svg>
);
const Skype = () => (
  <Svg s={28} vb="0 0 28 28"><path d="M8 5h12v18H8z" fill="#fff" /><FaSkype x="0" y="0" size={28} /></Svg>
);

const apps = [
  ["Пуск", <FaWindows size={20} />, { $wide: true }], ["Edge", <FaEdgeLegacy size={27} />, { $color: "#0c7bdc" }], ["Проводник", <Explorer />, {}],
  ["Opera", <FaOpera size={29} />, { $color: "#e3172b", $open: true }], ["Git Bash", <GitBash />, { $open: true }], ["WebStorm", <WebStorm />, { $open: true }],
  ["Telegram", <Telegram />, { $open: true }], ["Paint", <Paint />, {}], ["Chrome", <Chrome />, { $active: true }], ["Calculator", <Calculator />, {}],
  ["Services", <Gears />, {}], ["Console", <Console />, {}], ["Remote Desktop", <Remote />, {}], ["Steam", <Steam />, { $open: true }],
  ["Skype", <Skype />, { $color: "#12a5e6", $open: true }],
];

export default function App() {
  return (
    <Desktop>
      <Global />
      <TabStrip>
        {tabs.map(([icon, t], i) => (
          <Tab key={i} $z={40 - i}>
            <TabShape width="65" height="30" viewBox="0 0 65 30"><path d="M0 29.500L10 0H51L65 29.500" fill="#d9d9d9" stroke="#a0a0a0" strokeWidth="1.200" /></TabShape>
            {icon}
            <TabTitle>{t}</TabTitle>
          </Tab>
        ))}
        <Tab $z={60} $active>
          <TabShape width="65" height="30" viewBox="0 0 65 30"><path d="M0 30L10 0H51L65 30" fill="#f1f1f1" stroke="#a0a0a0" strokeWidth="1.200" /></TabShape>
          <TabTitle>C</TabTitle>
          <Svg s={9} vb="0 0 9 9"><path d="M.5.5l8 8M8.500.5l-8 8" stroke="#555" strokeWidth="1.800" /></Svg>
        </Tab>
        <NewTab aria-label="Новая вкладка"><Svg w={43} h={22} vb="0 0 43 22"><path d="M3 .5h28q2 0 3 2l7 17q1 2-2 2H12q-2 0-3-2L1 3Q0 .5 3 .5z" fill="#d3d3d3" stroke="#c2c2c2" /></Svg></NewTab>
        <WindowTools>
          <UserName>lesha</UserName>
          <WinButton aria-label="Свернуть"><Svg s={13} vb="0 0 13 13"><path d="M0 7.500h13" stroke="#000" /></Svg></WinButton>
          <WinButton aria-label="Развернуть"><Svg s={13} vb="0 0 13 13"><path d="M.5 3.500h9v9h-9zM3.500 3V.5h9v9H10" stroke="#000" /></Svg></WinButton>
          <WinButton aria-label="Закрыть"><Svg s={13} vb="0 0 13 13"><path d="M.5.5l12 12M12.500.5l-12 12" stroke="#000" /></Svg></WinButton>
        </WindowTools>
      </TabStrip>

      <Toolbar>
        <NavGroup>
          <IconButton aria-label="Назад"><Svg><path d="M18 10H3M10 3l-7 7 7 7" stroke="currentColor" strokeWidth="2" /></Svg></IconButton>
          <IconButton aria-label="Вперёд" $off><Svg><path d="M2 10h15M10 3l7 7-7 7" stroke="currentColor" strokeWidth="2" /></Svg></IconButton>
          <IconButton aria-label="Обновить"><Svg><path d="M16 5.500A7.500 7.500 0 1 0 17.500 12" stroke="currentColor" strokeWidth="2.200" /><path d="M18.500 1v8h-8z" fill="currentColor" /></Svg></IconButton>
          <IconButton aria-label="Домой"><Svg><path d="M2.500 10.500L10 3l7.500 7.500H15V17H5v-6.500z" stroke="currentColor" strokeWidth="2" /></Svg></IconButton>
        </NavGroup>
        <Omnibox>
          <Svg s={18}><circle cx="10" cy="10" r="8.800" stroke="#555" strokeWidth="1.800" /><path d="M10 9v6M10 5v2.200" stroke="#555" strokeWidth="2" /></Svg>
          <UrlBox>
            <UrlInput aria-label="Адрес" defaultValue="" />
            <UrlPaint><b>www.cshub.ru</b>/stats/hlstats.php?game=cstrike</UrlPaint>
          </UrlBox>
          <IconButton type="button" aria-label="Масштаб"><Svg><circle cx="8" cy="8" r="6" stroke="#555" strokeWidth="1.800" /><path d="M12.500 12.500l6 6M5 8h6" stroke="#555" strokeWidth="2" /></Svg></IconButton>
          <IconButton type="button" aria-label="В закладки"><Svg><path d="M10 2l2.300 5.600 6 .5-4.600 3.900 1.500 6-5.200-3.200L4.800 18l1.500-6L1.700 8.100l6-.5z" stroke="#555" strokeWidth="1.700" /></Svg></IconButton>
        </Omnibox>
        <Extensions>
          <IconButton aria-label="Adblock"><Svg><path d="M6 0h8l6 6v8l-6 6H6l-6-6V6z" fill="#e0161b" /><FaHandPaper x="4" y="3" size={13} color="#fff" /></Svg></IconButton>
          <IconButton aria-label="Инструменты" $color="#4d6fa8"><FaWrench size={19} /></IconButton>
          <IconButton aria-label="Пипетка" $color="#1c2b1c"><FaEyeDropper size={17} /><ExtBadge $bg="#4285f4" /></IconButton>
          <IconButton aria-label="Таймер"><Svg><path d="M2 10Q2 3 10 3t8 7q-8 4-16 0z" fill="#d8230f" /><path d="M6 9l10-3 3 6-9 3z" fill="#f7c52c" /><path d="M10 10l9-1v5z" fill="#4aa02c" /></Svg><ExtBadge $bg="#0a6b0a">3m</ExtBadge></IconButton>
          <IconButton aria-label="Звезда"><Svg><path d="M7 1l6 18" stroke="#f4652a" strokeWidth="3.600" /><path d="M14 2L6 18" stroke="#8a4fa8" strokeWidth="3.600" /><path d="M1 7l18 6" stroke="#2fa9e8" strokeWidth="3.600" /></Svg></IconButton>
          <IconButton aria-label="Поиск GitHub"><Svg><circle cx="8" cy="8" r="7" stroke="#b5b5b5" strokeWidth="1.800" /><FaGithub x="3.500" y="3.500" size={9} color="#bbb" /><path d="M13 13l6 6" stroke="#b5b5b5" strokeWidth="3" /></Svg></IconButton>
          <IconButton aria-label="m"><Svg><circle cx="10" cy="10" r="10" fill="#0fb9ae" /><text x="10" y="14" fontSize="13" fontFamily="Roboto" fill="#eaffff" textAnchor="middle">m</text></Svg></IconButton>
          <IconButton aria-label="Помидор"><Svg><circle cx="10" cy="11" r="8.500" fill="#a5696a" /><ellipse cx="8" cy="8" rx="4" ry="2.500" fill="#c9a0a0" /><path d="M6 4l4 1 4-2M10 5V1" stroke="#6b5a4c" strokeWidth="1.500" /></Svg></IconButton>
          <IconButton aria-label="Почта"><Svg><path d="M0 2h20v15H0z" fill="#8aa0d6" /><path d="M1 3l9 8 9-8" stroke="#e6ecf8" strokeWidth="2" /></Svg><ExtBadge $bg="#8ea6e0">51</ExtBadge></IconButton>
          <IconButton aria-label="Меню"><Svg><circle cx="10" cy="3.500" r="2" fill="#555" /><circle cx="10" cy="10" r="2" fill="#555" /><circle cx="10" cy="16.500" r="2" fill="#555" /></Svg></IconButton>
        </Extensions>
      </Toolbar>

      <Bookmarks>
        {bookmarks.map((b) => (
          <Bookmark key={b} href="#">
            {b === "Planner" ? <Todoist /> : <Folder />}
            {b.length > 20 ? <Faded>{b}</Faded> : b}
          </Bookmark>
        ))}
        <Overflow>»</Overflow>
        <Divider />
        <Bookmark href="#"><Folder />Other bookmarks</Bookmark>
      </Bookmarks>

      <Viewport>
        <Page>
          <Banner>
            <Logo href="#">
              <Svg w={39} h={39} vb="0 0 39 39">
                <defs><linearGradient id="logo" x2="0" y2="1"><stop stopColor="#b9cdea" /><stop offset=".45" stopColor="#4585c4" /><stop offset=".75" stopColor="#0a5fb4" /><stop offset="1" stopColor="#0b66bd" /></linearGradient></defs>
                <rect width="39" height="39" rx="6" fill="url(#logo)" />
                <path d="M0 21h5l3-3 2 3h3l3-6 3 5 3 2 4-12 4 9 3-6 3 7 2-2" stroke="#d7e6f6" strokeWidth="1.300" />
              </Svg>
              <div>HLSTATSX: <span>CE</span></div>
            </Logo>
            <MenuTabs>
              <MenuTab href="#">В начало</MenuTab>
              <MenuTab href="#">Поиск</MenuTab>
              <MenuTab href="#">Помощь</MenuTab>
            </MenuTabs>
          </Banner>
          <Crumbs>
            <a href="#">CSHUB.RU -</a><Chevrons /><a href="#">HLstatsX</a><Chevrons /><a href="#">Counter-Strike</a>
          </Crumbs>
          <Fade />
          <SectionTitle><Caret />Разделы</SectionTitle>
          <Sections>
            {sections.map(([name, icon]) => <li key={name}><SectionLink href="#">{icon}{name}</SectionLink></li>)}
          </Sections>
          <SectionTitle><Caret />Серверы</SectionTitle>
          <Board>
            <Summary>
              Отслеживатся <b>53,536</b> игроков (<b>+219</b> новых игроков за 24 часа) с <b>2,732,323</b> фрагами (<b>+6,673</b> за 24 часа) и <b>904,394</b> хедшотами (<b>33.10%</b>) на <b>5</b> серверах
            </Summary>
            <Table>
              <colgroup>{columns.map(([c, w]) => <col key={c} width={`${w}%`} />)}</colgroup>
              <thead><tr>{columns.map(([c], i) => <Th key={c} $left={i < 2}>{c}</Th>)}</tr></thead>
              <tbody>
                {servers.map(([name, port, ...rest], i) => (
                  <Tr key={name} $alt={i === 1}>
                    <Td $left><ServerName href="#"><Soldier />CSHUB {name}</ServerName></Td>
                    <Td $left>cshub.ru:{port} (<a href="#">войти</a>)</Td>
                    {rest.map((v, j) => <Td key={j}>{v}</Td>)}
                  </Tr>
                ))}
              </tbody>
            </Table>
            <MapBox>
              <SatelliteMap />
              {pins.map(([x, y], i) => (
                <Pin key={i} $x={x / 15.68} $y={(y - 9) / 12.81} aria-label={`Игрок ${i + 1}`}>
                  <Svg w={14} h={23} vb="0 0 14 23"><path d="M7 1Q13 1 13 7 13 10 7.500 16V22.500H6.500V16Q1 10 1 7 1 1 7 1z" fill="#5c5cff" stroke="#000" strokeWidth="1.800" /></Svg>
                </Pin>
              ))}
              <MapType>
                <select aria-label="Тип карты" defaultValue="Спутник"><option>Спутник</option><option>Карта</option></select>
                <Svg w={9} h={5} vb="0 0 9 5"><path d="M0 0h9L4.500 5z" fill="#666" /></Svg>
              </MapType>
              <MapControl $right={16} $top={11}>
                <MapButton $size={28} aria-label="Во весь экран"><Svg s={18} vb="0 0 18 18"><path d="M1 6V1h5M12 1h5v5M17 12v5h-5M6 17H1v-5" stroke="#666" strokeWidth="2" /></Svg></MapButton>
              </MapControl>
              <MapControl $right={12} $top={296}>
                <MapButton $size={31} aria-label="Просмотр улиц"><Svg w={14} h={22} vb="0 0 14 22"><path d="M2 9q5-2 10 0l1 6h-2l-1 6H4l-1-6H1z" fill="#f8b62d" stroke="#d8961c" /><circle cx="7" cy="4" r="3.500" fill="#fbb829" stroke="#d8961c" /><path d="M5 9l2 2 2-2" stroke="#e2552a" strokeWidth="1.500" /></Svg></MapButton>
              </MapControl>
              <MapControl $right={12} $top={338}>
                <MapButton $size={31} aria-label="Увеличить"><Svg s={12} vb="0 0 12 12"><path d="M6 0v12M0 6h12" stroke="#666" strokeWidth="3" /></Svg></MapButton>
                <MapButton $size={31} aria-label="Уменьшить"><Svg s={12} vb="0 0 12 12"><path d="M0 6h12" stroke="#666" strokeWidth="3" /></Svg></MapButton>
              </MapControl>
              <GoogleMark href="#">Google</GoogleMark>
              <Attribution><span>Картографические данные © 2017 INEGI Изображения ©2017 NASA, TerraMetrics</span><a href="#">Условия использования</a></Attribution>
            </MapBox>
          </Board>
        </Page>
        <ScrollBar>
          <Svg w={9} h={5} vb="0 0 9 5"><path d="M0 5h9L4.500 0z" fill="#999" /></Svg>
          <Thumb />
          <Svg w={9} h={5} vb="0 0 9 5"><path d="M0 0h9L4.500 5z" fill="#505050" /></Svg>
        </ScrollBar>
      </Viewport>

      <TaskBar>
        <Apps>{apps.map(([name, icon, look]) => <AppButton key={name} aria-label={name} {...look}>{icon}</AppButton>)}</Apps>
        <Tray>
          <Svg s={20}><path d="M2 14l8-8 8 8" stroke="#fff" strokeWidth="1.500" /></Svg>
          <Svg><rect width="20" height="20" rx="1" fill="#e0111a" /><FaUmbrella x="4" y="4" size={12} color="#fff" /></Svg>
          <Svg><path d="M1 5.500h16v9H1z" stroke="#fff" strokeWidth="1.300" /><path d="M3 7h6v6H3zM18 8h2v4h-2z" fill="#fff" /></Svg>
          <Svg><path d="M2 19Q3 5 18 3M6 19Q7 9 18 8M10 19Q11 13 18 12" stroke="#ccc" strokeWidth="1.200" /><circle cx="16" cy="17" r="2" fill="#fff" /></Svg>
          <Svg><path d="M1 7h3l4-4v14l-4-4H1zM11 8q2 2 0 4" stroke="#fff" strokeWidth="1.300" /><path d="M14 6q3 4 0 8M17 4q5 6 0 12" stroke="#888" strokeWidth="1.200" /></Svg>
          <Svg><path d="M5 4q4-5 8 0 4 0 4 4l-6 6H1q-2-5 3-6 0-3 1-4z" fill="#e8e8e8" /><circle cx="14" cy="13" r="5.500" fill="#2fa32f" /><path d="M11 13l2 2 4-4" stroke="#fff" strokeWidth="1.800" /></Svg>
          <Language>ENG</Language>
          <Clock>7:28 PM<br />10/31/2017</Clock>
          <Svg><path d="M1 1.500h18v14h-6l-3 3-2-3H1z" stroke="#fff" strokeWidth="1.300" /></Svg>
        </Tray>
      </TaskBar>
    </Desktop>
  );
}
